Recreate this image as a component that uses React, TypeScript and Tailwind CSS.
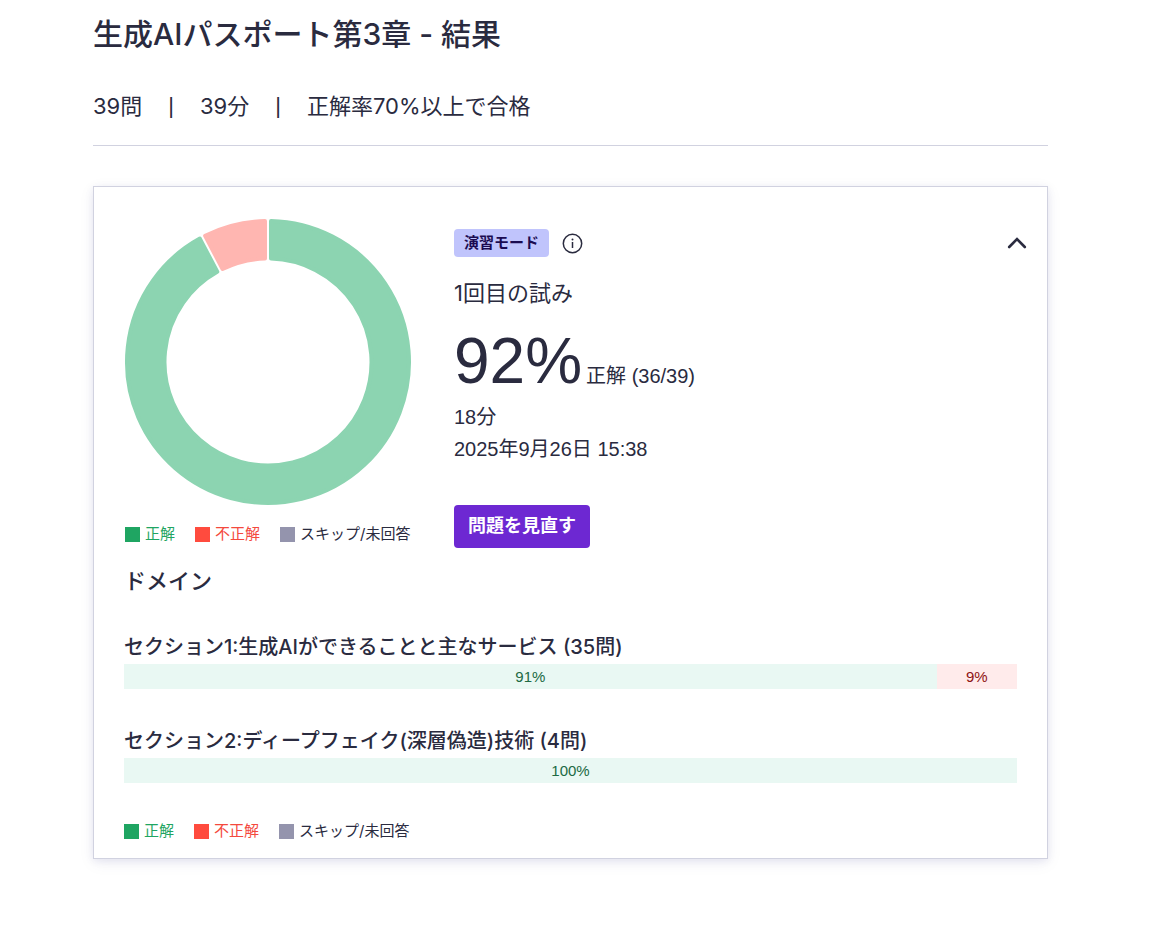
import { clsx } from 'clsx'

interface Section {
  title: string
  correct: number
  incorrect: number
}

const SECTIONS: Section[] = [
  { title: 'セクション1:生成AIができることと主なサービス (35問)', correct: 91, incorrect: 9 },
  { title: 'セクション2:ディープフェイク(深層偽造)技術 (4問)', correct: 100, incorrect: 0 },
]

const CORRECT = 36
const TOTAL = 39

const OUTER = 143
const INNER = 101.5

// Each slice is drawn slightly inset and then stroked in its own colour, which rounds the corners.
function slicePath(from: number, to: number) {
  const inset = 2
  const gap = 1 + inset
  const point = (r: number, angle: number) => `${r * Math.sin(angle)} ${-r * Math.cos(angle)}`
  const a = from * 2 * Math.PI
  const b = to * 2 * Math.PI
  const ro = OUTER - inset
  const ri = INNER + inset
  const large = to - from > 0.5 ? 1 : 0
  return [
    `M ${point(ro, a + gap / ro)}`,
    `A ${ro} ${ro} 0 ${large} 1 ${point(ro, b - gap / ro)}`,
    `L ${point(ri, b - gap / ri)}`,
    `A ${ri} ${ri} 0 ${large} 0 ${point(ri, a + gap / ri)}`,
    'Z',
  ].join(' ')
}

function ResultChart() {
  const split = CORRECT / TOTAL
  return (
    <svg viewBox="-144 -144 288 288" className="size-72" role="img" aria-label="正解率" strokeWidth="4" strokeLinejoin="round">
      <path d={slicePath(0, split)} className="fill-[#8cd4b1] stroke-[#8cd4b1]" />
      <path d={slicePath(split, 1)} className="fill-[#ffb6b1] stroke-[#ffb6b1]" />
    </svg>
  )
}

const LEGEND = [
  { label: '正解', swatch: 'bg-[#1fa562]', text: 'text-[#1fa562]' },
  { label: '不正解', swatch: 'bg-[#ff4b3e]', text: 'text-[#f4493d]' },
  { label: 'スキップ/未回答', swatch: 'bg-[#9494ad]', text: 'text-[#2a2b3f]' },
]

function Legend() {
  return (
    <ul className="flex gap-5 font-['Inter','Noto_Sans_CJK_JP',sans-serif] text-[15px] leading-5 whitespace-nowrap">
      {LEGEND.map((item) => (
        <li key={item.label} className="flex items-center gap-[5px]">
          <span className={clsx('size-[15px]', item.swatch)} />
          <span className={item.text}>{item.label}</span>
        </li>
      ))}
    </ul>
  )
}

function SectionBar({ title, correct, incorrect }: Section) {
  return (
    <li>
      <h3 className="mb-[3px] font-['Inter','Noto_Sans_CJK_JP',sans-serif] text-xl leading-7 font-medium">{title}</h3>
      <div className="flex h-[25px] text-center text-[15px] leading-[25px]">
        <div className="bg-[#e9f8f3] text-[#206a43]" style={{ width: `${correct}%` }}>
          {correct}%
        </div>
        {incorrect > 0 && (
          <div className="bg-[#ffebeb] text-[#8f1414]" style={{ width: `${incorrect}%` }}>
            {incorrect}%
          </div>
        )}
      </div>
    </li>
  )
}

function Divider() {
  return <span className="font-['Liberation_Sans',sans-serif]">|</span>
}

export default function App() {
  return (
    <main
      lang="ja"
      className="min-h-screen bg-white pt-4 pr-[126px] pb-20 pl-[93px] font-['Liberation_Sans','Noto_Sans_CJK_JP',sans-serif] text-[#2a2b3f]"
    >
      <h1 className="font-['Inter','Noto_Sans_CJK_JP',sans-serif] text-3xl leading-9 font-medium">生成AIパスポート第3章 - 結果</h1>

      <div className="mt-[38px] flex gap-[26px] border-b border-[#d1d2e0] pb-[23px] font-['Inter','Noto_Sans_CJK_JP',sans-serif] text-[22px] leading-8">
        <span>39問</span>
        <Divider />
        <span>39分</span>
        <Divider />
        <span>正解率70%以上で合格</span>
      </div>

      <section className="mt-10 border border-[#d1d2e0] px-[30px] pt-[31px] pb-[17px] shadow-[0_2px_8px_rgba(6,17,118,0.08),0_4px_16px_rgba(6,17,118,0.06)]">
        <div className="flex gap-[42px]">
          <div className="shrink-0">
            <ResultChart />
            <div className="mt-[18px] pl-px">
              <Legend />
            </div>
          </div>

          <div className="flex grow flex-col items-start pt-[11px]">
            <div className="flex w-full items-center">
              <span className="rounded bg-[#c0c4fc] px-2.5 text-[15px] leading-7 font-bold text-[#1b0b51]">演習モード</span>
              <button type="button" aria-label="演習モードについて" className="ml-[13px]">
                <svg viewBox="0 0 21 21" className="size-[21px]" fill="none" stroke="currentColor" strokeWidth="1.5">
                  <circle cx="10.5" cy="10.5" r="9.2" />
                  <path d="M10.5 9v6" />
                  <circle cx="10.5" cy="6.6" r="1" fill="currentColor" stroke="none" />
                </svg>
              </button>
              <button type="button" aria-label="折りたたむ" aria-expanded="true" className="-mr-3 ml-auto">
                <svg viewBox="0 0 24 24" className="size-6" fill="none" stroke="currentColor" strokeWidth="2.6">
                  <path d="M4.2 16 12 8.2l7.8 7.8" strokeLinecap="round" />
                </svg>
              </button>
            </div>
            <h2 className="mt-5 font-['Inter','Noto_Sans_CJK_JP',sans-serif] text-[22px] leading-8">1回目の試み</h2>
            <p className="mt-4 mb-1 flex items-baseline gap-1 text-xl">
              <span className="text-[64px] leading-[72px]">92%</span>
              <span>正解 (36/39)</span>
            </p>
            <p className="text-xl leading-8">18分</p>
            <p className="text-xl leading-8">2025年9月26日 15:38</p>
            <button type="button" className="mt-10 rounded bg-[#6d28d2] px-3.5 text-lg leading-[43px] font-bold text-white">
              問題を見直す
            </button>
          </div>
        </div>

        <h2 className="mt-[18px] text-[22px] leading-8 font-medium">ドメイン</h2>
        <ul className="mt-[35px] mb-[38px] space-y-[38px]">
          {SECTIONS.map((section) => (
            <SectionBar key={section.title} {...section} />
          ))}
        </ul>
        <Legend />
      </section>
    </main>
  )
}
